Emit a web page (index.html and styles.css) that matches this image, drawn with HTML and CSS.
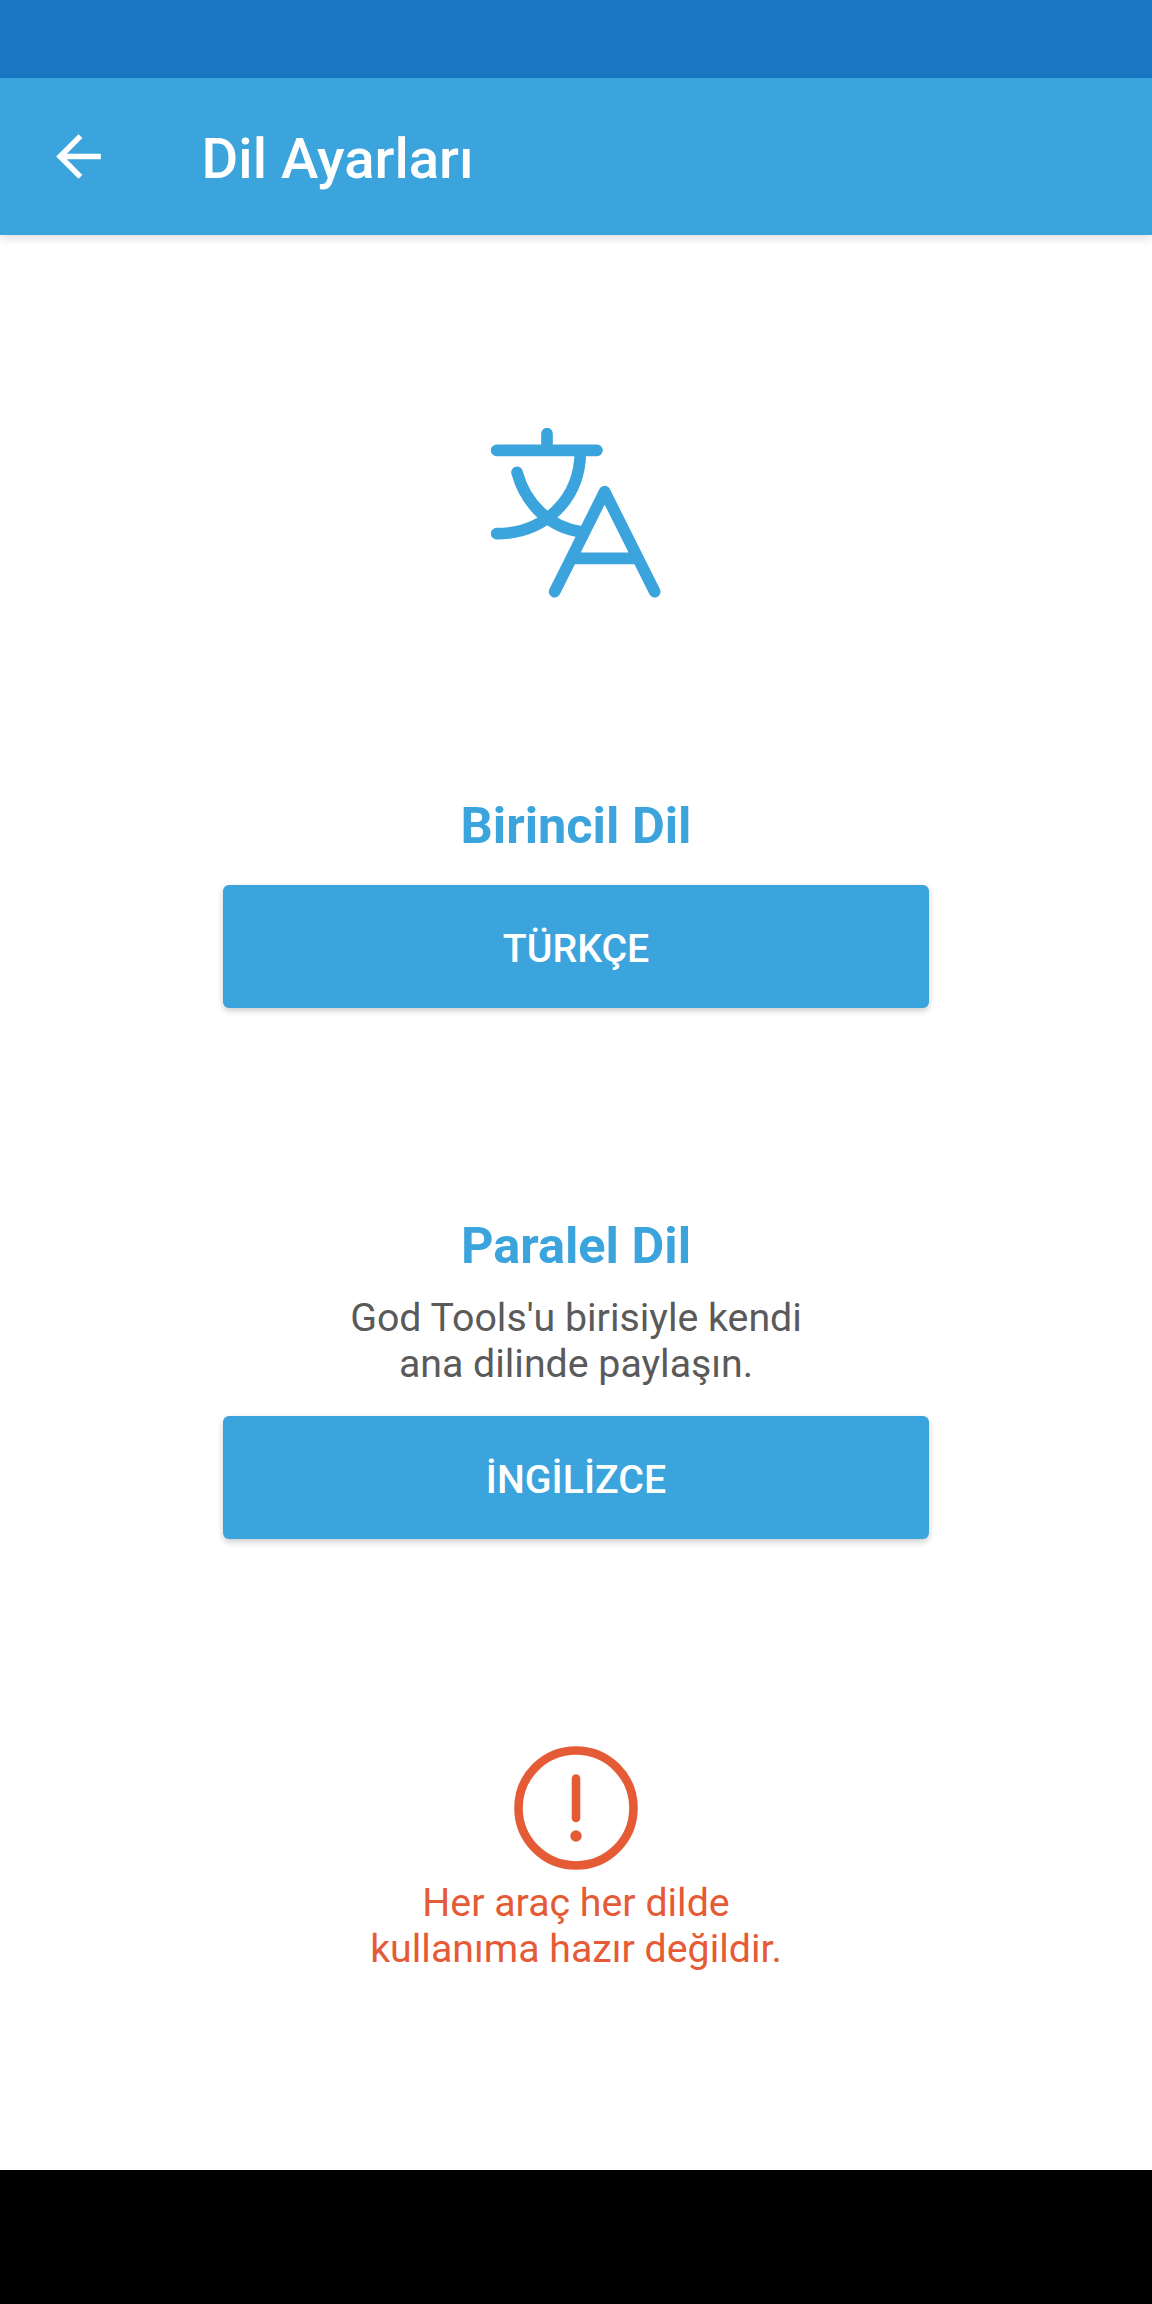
FILE: index.html
```html
<!DOCTYPE html>
<html lang="tr">
<head>
    <meta charset="UTF-8">
    <meta name="viewport" content="width=device-width, initial-scale=1.0">
    <title>Dil Ayarları</title>
    <link rel="stylesheet" href="styles.css">
</head>
<body>
    <div class="status-bar"></div>
    <header class="toolbar">
        <button class="back" aria-label="Geri">
            <svg viewBox="0 0 24 24"><path d="M20 11H7.83l5.59-5.59L12 4l-8 8 8 8 1.41-1.41L7.83 13H20v-2z"/></svg>
        </button>
        <h1 class="title">Dil Ayarları</h1>
    </header>
    <main class="content">
        <svg class="translate-icon" viewBox="62 53 510 510">
            <path d="M79 120H380M230 70V120M330 122C330 265 225 370 79 370M140 186C166 283 240 352 332 364"/>
            <path d="M253 544L403 244L553 544M312 444H495"/>
        </svg>
        <section class="primary">
            <h2 class="heading">Birincil Dil</h2>
            <button class="lang-btn">TÜRKÇE</button>
        </section>
        <section class="parallel">
            <h2 class="heading">Paralel Dil</h2>
            <p class="text">God Tools'u birisiyle kendi<br>ana dilinde paylaşın.</p>
            <button class="lang-btn">İNGİLİZCE</button>
        </section>
        <section class="warning">
            <svg class="warning-icon" viewBox="0 0 124 124">
                <circle class="ring" cx="62" cy="62" r="57.5"/>
                <path class="bar" d="M62 32.5V72"/>
                <circle class="dot" cx="62" cy="90" r="5.7"/>
            </svg>
            <p class="text">Her araç her dilde<br>kullanıma hazır değildir.</p>
        </section>
    </main>
    <div class="nav-bar"></div>
</body>
</html>
```

FILE: styles.css
```css
*{
    box-sizing: border-box;
    margin: 0;
    padding: 0;
}
body{
    height: 2304px;
    display: flex;
    flex-direction: column;
    background: #fff;
    font-family: Roboto, "Noto Sans", sans-serif;
}
button{
    border: none;
    color: #fff;
    font-family: inherit;
    cursor: pointer;
}
.status-bar{
    flex: none;
    height: 78.4px;
    background: #1977c4;
}
.toolbar{
    flex: none;
    height: 156.6px;
    display: flex;
    align-items: center;
    padding-left: 45px;
    background: #3ca4dc;
    box-shadow: 0 3px 9px rgba(0, 0, 0, 0.14);
}
.back{
    width: 67px;
    height: 67px;
    margin-right: 89.6px;
    background: none;
}
.back svg{
    display: block;
    fill: #fff;
}
.title{
    color: #fff;
    font-size: 56.3px;
    font-weight: 500;
    line-height: 66px;
    padding-top: 4px;
}
.content{
    flex: 1;
    display: flex;
    flex-direction: column;
    align-items: center;
    padding-top: 192.7px;
}
.translate-icon{
    width: 170px;
    height: 170px;
    fill: none;
    stroke: #3ca4dc;
    stroke-width: 35;
    stroke-linecap: round;
    stroke-linejoin: round;
}
.primary,
.parallel,
.warning{
    display: flex;
    flex-direction: column;
    align-items: center;
    text-align: center;
}
.primary{
    margin-top: 198.3px;
}
.parallel{
    margin-top: 208px;
}
.warning{
    margin-top: 207px;
    color: #e55b36;
}
.heading{
    color: #3ca4dc;
    font-size: 50.5px;
    font-weight: 700;
    line-height: 59px;
}
.text{
    font-size: 39.3px;
    line-height: 45.8px;
}
.parallel .text{
    margin: 20.5px 0 -2px;
    color: #5a5a5a;
}
.lang-btn{
    width: 706px;
    height: 123px;
    margin-top: 30.5px;
    padding-top: 4px;
    border-radius: 6px;
    background: #3ca4dc;
    box-shadow: 0 3px 6px rgba(0, 0, 0, 0.2);
    font-size: 39.3px;
    font-weight: 500;
}
.warning-icon{
    width: 124px;
    height: 124px;
    margin-bottom: 11px;
    fill: none;
    stroke: #e55b36;
    stroke-width: 8.6;
    stroke-linecap: round;
}
.warning-icon .dot{
    fill: #e55b36;
    stroke: none;
}
.nav-bar{
    flex: none;
    height: 134.5px;
    background: #000;
}
```
